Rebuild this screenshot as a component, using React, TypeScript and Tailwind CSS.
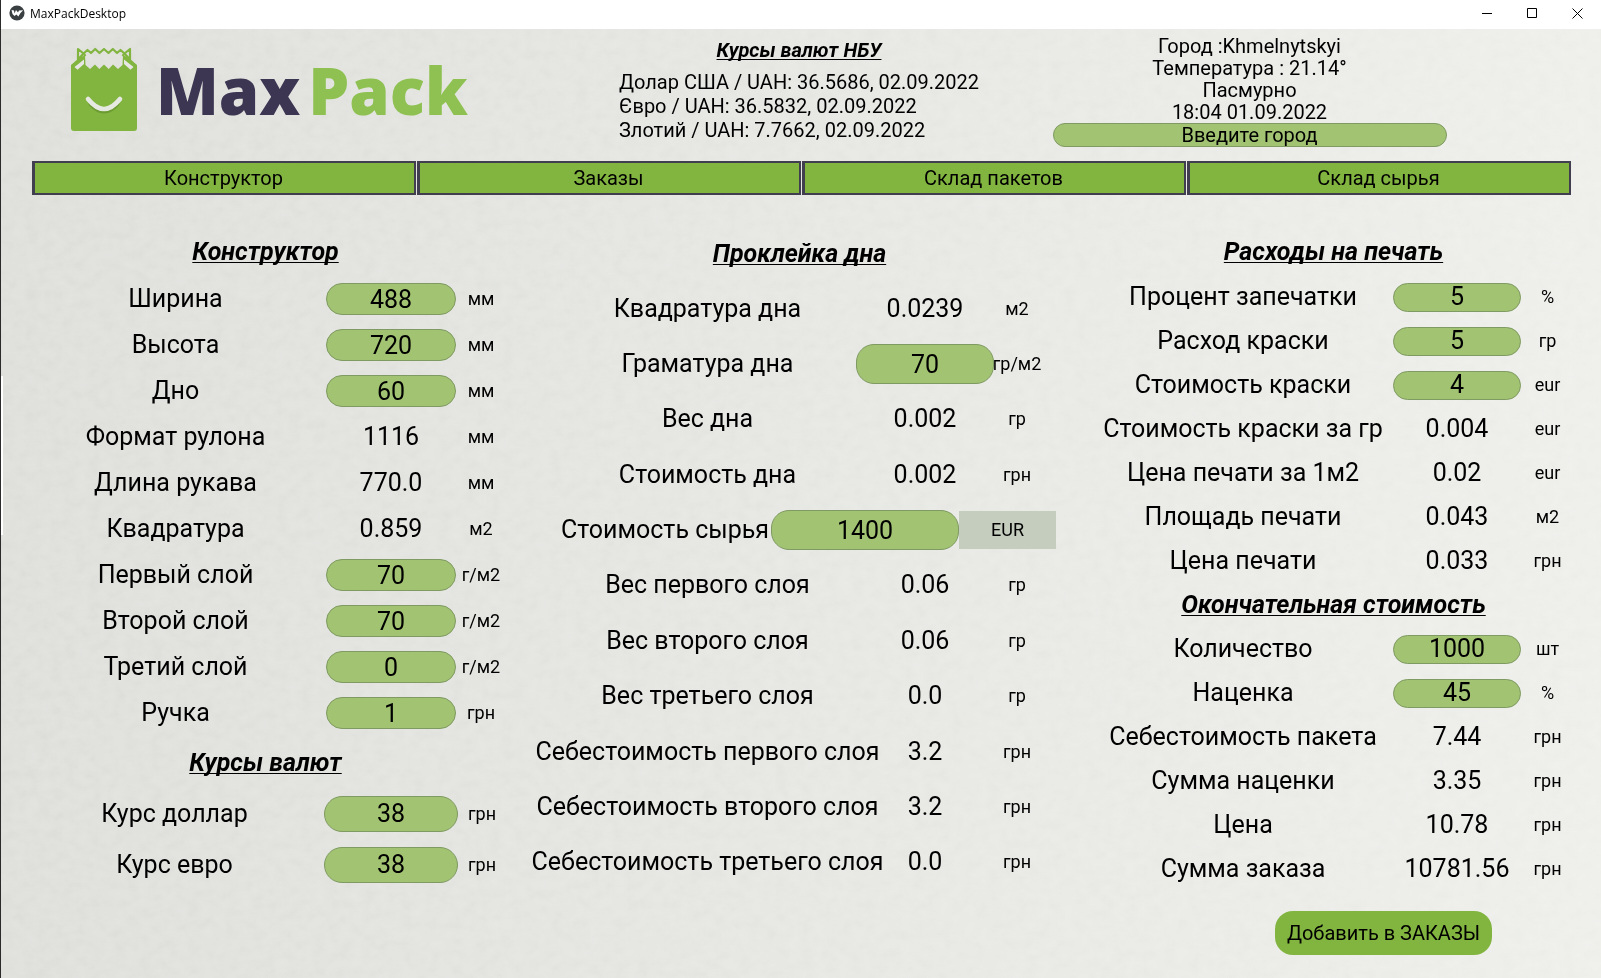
import React from "react";

type RowData = { label: string; value: string; unit: string; input?: boolean };

const designRows: RowData[] = [
  { label: "Ширина", value: "488", unit: "мм", input: true },
  { label: "Высота", value: "720", unit: "мм", input: true },
  { label: "Дно", value: "60", unit: "мм", input: true },
  { label: "Формат рулона", value: "1116", unit: "мм" },
  { label: "Длина рукава", value: "770.0", unit: "мм" },
  { label: "Квадратура", value: "0.859", unit: "м2" },
  { label: "Первый слой", value: "70", unit: "г/м2", input: true },
  { label: "Второй слой", value: "70", unit: "г/м2", input: true },
  { label: "Третий слой", value: "0", unit: "г/м2", input: true },
  { label: "Ручка", value: "1", unit: "грн", input: true },
];

const rateRows: RowData[] = [
  { label: "Курс доллар", value: "38", unit: "грн", input: true },
  { label: "Курс евро", value: "38", unit: "грн", input: true },
];

const bottomRows: RowData[] = [
  { label: "Квадратура дна", value: "0.0239", unit: "м2" },
  { label: "Граматура дна", value: "70", unit: "гр/м2", input: true },
  { label: "Вес дна", value: "0.002", unit: "гр" },
  { label: "Стоимость дна", value: "0.002", unit: "грн" },
];

const layerRows: RowData[] = [
  { label: "Вес первого слоя", value: "0.06", unit: "гр" },
  { label: "Вес второго слоя", value: "0.06", unit: "гр" },
  { label: "Вес третьего слоя", value: "0.0", unit: "гр" },
  { label: "Себестоимость первого слоя", value: "3.2", unit: "грн" },
  { label: "Себестоимость второго слоя", value: "3.2", unit: "грн" },
  { label: "Себестоимость третьего слоя", value: "0.0", unit: "грн" },
];

const printRows: RowData[] = [
  { label: "Процент запечатки", value: "5", unit: "%", input: true },
  { label: "Расход краски", value: "5", unit: "гр", input: true },
  { label: "Стоимость краски", value: "4", unit: "eur", input: true },
  { label: "Стоимость краски за гр", value: "0.004", unit: "eur" },
  { label: "Цена печати за 1м2", value: "0.02", unit: "eur" },
  { label: "Площадь печати", value: "0.043", unit: "м2" },
  { label: "Цена печати", value: "0.033", unit: "грн" },
];

const totalRows: RowData[] = [
  { label: "Количество", value: "1000", unit: "шт", input: true },
  { label: "Наценка", value: "45", unit: "%", input: true },
  { label: "Себестоимость пакета", value: "7.44", unit: "грн" },
  { label: "Сумма наценки", value: "3.35", unit: "грн" },
  { label: "Цена", value: "10.78", unit: "грн" },
  { label: "Сумма заказа", value: "10781.56", unit: "грн" },
];

const pill =
  "w-full min-w-0 rounded-[18px] border border-[#7f9a62] bg-[#a1c372] text-center outline-none";

const underlined =
  "text-center font-bold whitespace-nowrap italic underline decoration-1 underline-offset-2 [text-decoration-skip-ink:none]";

function Row({ row, grid, pillHeight }: { row: RowData; grid: string; pillHeight: string }) {
  const id = React.useId();
  return (
    <div className={`grid items-center ${grid}`}>
      <label htmlFor={id} className="flex justify-center whitespace-nowrap">
        {row.label}
      </label>
      {row.input ? (
        <input id={id} defaultValue={row.value} className={`${pill} ${pillHeight}`} />
      ) : (
        <output id={id} className="flex justify-center whitespace-nowrap">
          {row.value}
        </output>
      )}
      <span className="flex justify-center text-lg whitespace-nowrap">{row.unit}</span>
    </div>
  );
}

function Logo() {
  return (
    <div className="flex items-start gap-[19px]">
      <svg viewBox="0 0 66 84" className="h-[84px] w-[66px]" aria-hidden="true">
        <path
          d="M0 18 L8 11 L14 8 L14.5 18 L19 22 L24 17.5 L28.3 22 L33 17.5 L37.7 22 L42 17.5 L47 22 L51.5 18 L52 8 L58 11 L66 18 L66 81 Q66 84 63 84 L3 84 Q0 84 0 81 Z"
          fill="#82b440"
        />
        <path
          d="M7 13 L7 2 L12.5 6.5 L7.5 12 M12.5 6.5 L16.5 3 L20 6 L24.2 2 L28.5 6 L33 2 L37.5 6 L41.8 2 L46 6 L49.5 3 L53.5 6.5 L59 2 L59 13 M53.5 6.5 L58.5 12 M12.5 6.5 L14.5 9 M53.5 6.5 L51.5 9"
          fill="none"
          stroke="#82b440"
          strokeWidth="2.2"
          strokeLinejoin="round"
        />
        <path
          d="M3.5 20 L6.5 22.8 L13 17 L13 12.5 Z M62.5 20 L59.5 22.8 L53 17 L53 12.5 Z"
          fill="#e6e7e3"
        />
        <path d="M20 57 Q33 71 46 57" fill="none" stroke="#6c9c31" strokeWidth="5" strokeLinecap="round" />
        <path d="M17 52 Q33 72 49 52" fill="none" stroke="#e6e8e2" strokeWidth="4.6" strokeLinecap="round" />
      </svg>
      <div className="flex gap-2 font-['Open_Sans'] text-[65px] leading-[87px] font-extrabold">
        <span className="text-[#3d3653]">Max</span>
        <span className="text-[#8ec152]">Pack</span>
      </div>
    </div>
  );
}

export default function App() {
  return (
    <div className="relative flex min-h-screen flex-col overflow-hidden border-l border-[#2b2b2b] bg-linear-to-r from-[#e0e1dd] to-[#eff0ec] font-['Roboto',sans-serif] text-[25px] leading-[30px] text-black">
      <svg
        className="pointer-events-none absolute inset-0 h-full w-full opacity-20 mix-blend-soft-light"
        aria-hidden="true"
      >
        <filter id="paper" x="0" y="0" width="100%" height="100%" colorInterpolationFilters="sRGB">
          <feTurbulence type="fractalNoise" baseFrequency="0.08 0.1" numOctaves="3" seed="4" />
          <feColorMatrix values="1 0 0 0 0  1 0 0 0 0  1 0 0 0 0  0 0 0 0 1" />
        </filter>
        <rect width="100%" height="100%" filter="url(#paper)" />
      </svg>
      <div className="absolute top-[376px] left-0 h-[159px] w-[2px] bg-white" />

      <div className="relative flex h-[29px] items-start bg-white pl-2 font-['Open_Sans'] text-xs leading-[27px]">
        <svg viewBox="0 0 16 16" className="mt-[5px] mr-[5px] size-4" aria-hidden="true">
          <circle cx="8" cy="8" r="7.6" fill="#3a3f42" />
          <path
            d="M2.5 5 L5 5.5 L5.5 8.5 L7 5 L9 7.5 L10 5.5 L14.2 5.2 L11.5 8 L9.3 11.5 L7.5 9.5 L5.5 11 L3.5 9 Z"
            fill="#fff"
          />
        </svg>
        <span>MaxPackDesktop</span>
        <div className="ml-auto flex h-[27px] pr-px">
          <button aria-label="Свернуть" className="grid w-[45px] place-items-center">
            <svg width="11" height="11" viewBox="0 0 11 11">
              <path d="M0 5.5H10" stroke="#000" />
            </svg>
          </button>
          <button aria-label="Развернуть" className="grid w-[45px] place-items-center">
            <svg width="11" height="11" viewBox="0 0 11 11">
              <path d="M.5 .5H9.5V9.5H.5Z" fill="none" stroke="#000" />
            </svg>
          </button>
          <button aria-label="Закрыть" className="grid w-[45px] place-items-center">
            <svg width="11" height="11" viewBox="0 0 11 11">
              <path d="M.5 .5L10.5 10.5M10.5 .5L.5 10.5" stroke="#000" />
            </svg>
          </button>
        </div>
      </div>

      <header className="relative grid h-[132px] grid-cols-[1fr_350px_1fr] pr-1 text-xl">
        <div className="pt-[18px] pl-[70px]">
          <Logo />
        </div>
        <div className="pt-[9px]">
          <h2 className={`mb-2 leading-6 ${underlined}`}>Курсы валют НБУ</h2>
          <div className="flex flex-col items-center">
            <div className="flex flex-col leading-6 whitespace-nowrap">
              <span>Долар США / UAH: 36.5686, 02.09.2022</span>
              <span>Євро / UAH: 36.5832, 02.09.2022</span>
              <span>Злотий / UAH: 7.7662, 02.09.2022</span>
            </div>
          </div>
        </div>
        <div className="flex flex-col items-center pt-[6px] pr-[72px] leading-[22px]">
          <span>Город :Khmelnytskyi</span>
          <span>Температура : 21.14°</span>
          <span>Пасмурно</span>
          <span>18:04 01.09.2022</span>
          <input
            aria-label="Введите город"
            placeholder="Введите город"
            className="h-6 w-[394px] rounded-full border border-[#7f9a62] bg-[#a1c372] text-center outline-none placeholder:text-black"
          />
        </div>
      </header>

      <nav className="relative flex gap-px pr-[30px] pl-[31px] text-xl">
        {["Конструктор", "Заказы", "Склад пакетов", "Склад сырья"].map((name) => (
          <button
            key={name}
            className="h-[34px] flex-1 border-2 border-l-3 border-[#403e4f] bg-[#82b440] pr-[2px] leading-7"
          >
            {name}
          </button>
        ))}
      </nav>

      <main className="relative grid flex-1 grid-cols-3 gap-[53px] pr-[27px] pl-[24px]">
        <section className="flex flex-col pt-[42px]">
          <h2 className={underlined}>Конструктор</h2>
          <div className="mt-[9px] flex flex-col">
            {designRows.map((row) => (
              <Row key={row.label} row={row} grid="h-[46px] grid-cols-[minmax(0,1fr)_130px_50px]" pillHeight="h-8" />
            ))}
          </div>
          <h2 className={`mt-3 ${underlined}`}>Курсы валют</h2>
          <div className="mt-[10px] flex flex-col">
            {rateRows.map((row) => (
              <Row key={row.label} row={row} grid="h-[51px] grid-cols-[minmax(0,1fr)_134px_48px]" pillHeight="h-9" />
            ))}
          </div>
        </section>

        <section className="flex flex-col pt-11 pb-[88px]">
          <h2 className={underlined}>Проклейка дна</h2>
          <div className="mt-3 grid flex-1 auto-rows-fr grid-cols-1">
            {bottomRows.map((row) => (
              <Row key={row.label} row={row} grid="grid-cols-[minmax(0,1fr)_138px_46px]" pillHeight="h-10" />
            ))}
            <div className="-mr-4 grid grid-cols-[minmax(0,1fr)_188px_97px] items-center">
              <label htmlFor="raw-cost" className="flex justify-center whitespace-nowrap">
                Стоимость сырья
              </label>
              <input id="raw-cost" defaultValue="1400" className={`${pill} h-10`} />
              <button className="h-[38px] bg-[#c5cebe] text-lg">EUR</button>
            </div>
            {layerRows.map((row) => (
              <Row key={row.label} row={row} grid="grid-cols-[minmax(0,1fr)_138px_46px]" pillHeight="h-10" />
            ))}
          </div>
        </section>

        <section className="flex flex-col pt-[42px]">
          <h2 className={underlined}>Расходы на печать</h2>
          <div className="mt-2 flex flex-col">
            {printRows.map((row) => (
              <Row key={row.label} row={row} grid="h-11 grid-cols-[minmax(0,1fr)_128px_53px]" pillHeight="h-[29px]" />
            ))}
          </div>
          <h2 className={`my-[7px] ${underlined}`}>Окончательная стоимость</h2>
          <div className="flex flex-col">
            {totalRows.map((row) => (
              <Row key={row.label} row={row} grid="h-11 grid-cols-[minmax(0,1fr)_128px_53px]" pillHeight="h-[29px]" />
            ))}
          </div>
          <button className="mt-5 mr-[82px] h-11 w-[217px] self-end rounded-[18px] bg-[#82b440] text-xl">
            Добавить в ЗАКАЗЫ
          </button>
        </section>
      </main>
    </div>
  );
}
